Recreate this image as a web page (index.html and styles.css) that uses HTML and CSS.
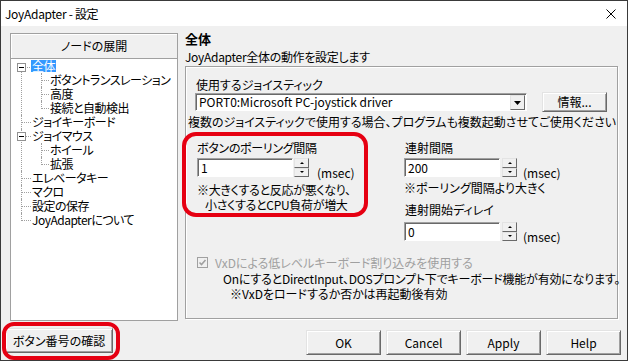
FILE: index.html
```html
<!DOCTYPE html>
<html lang="ja">
<head>
    <meta charset="UTF-8">
    <title>JoyAdapter - 設定</title>
    <link rel="stylesheet" href="styles.css">
</head>
<body>
    <div class="window">
        <div class="titlebar">
            <span class="title">JoyAdapter - 設定</span>
            <svg class="close" width="10" height="10" viewBox="0 0 10 10">
                <path d="M0.5 0.5 L9.5 9.5 M9.5 0.5 L0.5 9.5" stroke="#000" stroke-width="1" fill="none"/>
            </svg>
        </div>

        <div class="main">
            <div class="tree-panel">
                <div class="tree-head">ノードの展開</div>
                <ul class="tree">
                    <li>
                        <span class="toggle"></span><span class="node sel">全体</span>
                        <ul>
                            <li><span class="node">ボタントランスレーション</span></li>
                            <li><span class="node">高度</span></li>
                            <li><span class="node">接続と自動検出</span></li>
                        </ul>
                    </li>
                    <li><span class="node">ジョイキーボード</span></li>
                    <li>
                        <span class="toggle"></span><span class="node">ジョイマウス</span>
                        <ul>
                            <li><span class="node">ホイール</span></li>
                            <li><span class="node">拡張</span></li>
                        </ul>
                    </li>
                    <li><span class="node">エレベータキー</span></li>
                    <li><span class="node">マクロ</span></li>
                    <li><span class="node">設定の保存</span></li>
                    <li><span class="node">JoyAdapterについて</span></li>
                </ul>
            </div>

            <div class="page">
                <div class="page-title">全体</div>
                <div class="page-desc">JoyAdapter全体の動作を設定します</div>

                <div class="group">
                    <div class="label">使用するジョイスティック</div>
                    <div class="combo-row">
                        <div class="combo">
                            <span class="combo-text">PORT0:Microsoft PC-joystick driver</span>
                            <span class="combo-btn">
                                <svg width="7" height="4" viewBox="0 0 7 4"><polygon points="0,0 7,0 3.5,4" fill="#000"/></svg>
                            </span>
                        </div>
                        <button class="btn info-btn">情報...</button>
                    </div>
                    <div class="wide-note">複数のジョイスティックで使用する場合、プログラムも複数起動させてご使用ください</div>

                    <div class="cols">
                        <div class="col polling">
                            <div class="label">ボタンのポーリング間隔</div>
                            <div class="spin-row">
                                <div class="field">1</div>
                                <div class="spin"><span class="up"></span><span class="down"></span></div>
                                <span class="unit">(msec)</span>
                            </div>
                            <div class="hint first">※大きくすると反応が悪くなり、</div>
                            <div class="hint indent">小さくするとCPU負荷が増大</div>
                        </div>

                        <div class="col repeat">
                            <div class="label">連射間隔</div>
                            <div class="spin-row">
                                <div class="field">200</div>
                                <div class="spin"><span class="up"></span><span class="down"></span></div>
                                <span class="unit">(msec)</span>
                            </div>
                            <div class="repeat-note">※ポーリング間隔より大きく</div>
                            <div class="label delay-label">連射開始ディレイ</div>
                            <div class="spin-row delay-row">
                                <div class="field">0</div>
                                <div class="spin"><span class="up"></span><span class="down"></span></div>
                                <span class="unit">(msec)</span>
                            </div>
                        </div>
                    </div>

                    <div class="check-row">
                        <span class="checkbox">
                            <svg width="9" height="9" viewBox="0 0 9 9"><path d="M1.5 4.5 L3.5 6.5 L7.5 2" stroke="#a0a0a0" stroke-width="1.6" fill="none"/></svg>
                        </span>
                        <span class="check-label">VxDによる低レベルキーボード割り込みを使用する</span>
                    </div>
                    <div class="desc line1">OnにするとDirectInput、DOSプロンプト下でキーボード機能が有効になります。</div>
                    <div class="desc line2">※VxDをロードするか否かは再起動後有効</div>
                </div>
            </div>
        </div>

        <div class="footer">
            <div class="confirm-wrap">
                <button class="btn confirm-btn">ボタン番号の確認</button>
            </div>
            <div class="actions">
                <button class="btn action-btn">OK</button>
                <button class="btn action-btn">Cancel</button>
                <button class="btn action-btn">Apply</button>
                <button class="btn action-btn">Help</button>
            </div>
        </div>
    </div>
</body>
</html>
```

FILE: styles.css
```css
body {
    margin: 0;
    overflow: hidden;
    font-family: "Noto Sans CJK JP", "Noto Sans", sans-serif;
    font-size: 12px;
    font-feature-settings: "palt";
    color: #000;
    background: #f0f0f0;
}

.window {
    width: 628px;
    height: 361px;
    box-sizing: border-box;
    border: 1px solid #3a3a3a;
    background: #f0f0f0;
    display: flex;
    flex-direction: column;
}

.titlebar {
    height: 25px;
    flex-shrink: 0;
    background: #fff;
    display: flex;
    align-items: center;
    justify-content: space-between;
    padding: 0 11px 0 4px;
}

.title {
    line-height: 14px;
    letter-spacing: -0.3px;
}

.main {
    display: flex;
    align-items: flex-start;
    height: 295px;
    box-sizing: border-box;
    padding: 7px 0 0 9px;
}

/* tree */
.tree-panel {
    width: 168px;
    height: 288px;
    box-sizing: border-box;
    border: 1px solid #a0a0a0;
    background: #fff;
    flex-shrink: 0;
}

.tree-head {
    height: 24px;
    line-height: 24px;
    text-align: center;
    background: #f0f0f0;
    border-bottom: 1px solid #a0a0a0;
    box-shadow: inset 1px 1px 0 #fff;
}

.tree,
.tree ul {
    list-style: none;
    margin: 0;
    white-space: nowrap;
}

.tree {
    padding: 0 0 0 10px;
    letter-spacing: -0.5px;
}

.tree ul {
    padding: 0 0 0 9px;
}

.tree li {
    position: relative;
    padding-left: 11px;
}

.tree ul li {
    padding-left: 9px;
}

.node {
    display: block;
    height: 14px;
    line-height: 14px;
}

.tree li::before {
    content: "";
    position: absolute;
    left: 0;
    top: 0;
    width: 9px;
    height: 7px;
    border-left: 1px dotted #a0a0a0;
    border-bottom: 1px dotted #a0a0a0;
}

.tree ul li::before {
    width: 7px;
}

.tree > li:first-child::before {
    border-left: none;
    left: 1px;
    width: 8px;
}

.tree li:not(:last-child)::after {
    content: "";
    position: absolute;
    left: 0;
    top: 7px;
    bottom: 0;
    border-left: 1px dotted #a0a0a0;
}

.toggle {
    position: absolute;
    left: -4px;
    top: 3px;
    width: 9px;
    height: 9px;
    box-sizing: border-box;
    border: 1px solid #919191;
    background: #fff;
    z-index: 1;
}

.toggle::after {
    content: "";
    position: absolute;
    left: 1px;
    top: 3px;
    width: 5px;
    height: 1px;
    background: #000;
}

.node.sel {
    display: table;
    margin: 1px 0 1px -1px;
    padding: 0 1px;
    height: 12px;
    line-height: 12px;
    background: #3399ff;
    color: #fff;
}

/* right page */
.page {
    width: 433px;
    margin: -1px 0 0 7px;
}

.page-title {
    font-size: 13px;
    font-weight: bold;
    line-height: 14px;
}

.page-desc {
    margin-top: 4px;
    line-height: 13px;
    letter-spacing: -0.3px;
}

.group {
    margin-top: 3px;
    height: 253px;
    box-sizing: border-box;
    border: 1px solid #a0a0a0;
    box-shadow: inset 1px 1px 0 #fff, 1px 1px 0 #fff;
    padding: 11px 0 0 10px;
}

.label {
    line-height: 14px;
    white-space: nowrap;
}

.combo-row {
    display: flex;
    align-items: center;
    height: 20px;
}

.combo {
    width: 332px;
    height: 18px;
    margin-left: -1px;
    box-sizing: border-box;
    display: flex;
    align-items: stretch;
    background: #fff;
    border: 1px solid;
    border-color: #a0a0a0 #fff #fff #a0a0a0;
    box-shadow: inset 1px 1px 0 #696969;
}

.combo-text {
    flex: 1;
    padding: 1px 0 0 3px;
    line-height: 14px;
    white-space: nowrap;
}

.combo-btn {
    width: 15px;
    margin: 1px 1px 0 0;
    box-sizing: border-box;
    display: flex;
    align-items: center;
    justify-content: center;
    background: #f0f0f0;
    border: 1px solid;
    border-color: #e3e3e3 #696969 #696969 #e3e3e3;
}

.btn {
    font: inherit;
    color: #000;
    padding: 0;
    background: #f0f0f0;
    border: 1px solid;
    border-color: #e3e3e3 #696969 #696969 #e3e3e3;
    box-shadow: inset 1px 1px 0 #fff, inset -1px -1px 0 #a0a0a0;
    line-height: 14px;
}

.info-btn {
    width: 65px;
    height: 20px;
    margin-left: 15px;
}

.wide-note {
    margin: 3px 0 0 -8px;
    line-height: 14px;
    white-space: nowrap;
}

.cols {
    display: flex;
    margin-top: 12px;
    height: 100px;
}

.col {
    position: relative;
}

.polling {
    width: 207px;
    margin-left: 1px;
}

.polling::before {
    content: "";
    position: absolute;
    left: -15px;
    top: -9px;
    width: 186px;
    height: 85px;
    box-sizing: border-box;
    border: 4px solid #e60012;
    border-radius: 14px;
}

.polling .label,
.polling .hint {
    letter-spacing: -0.3px;
}

.repeat .label {
    padding-left: 1px;
}

.spin-row {
    display: flex;
    align-items: flex-start;
    margin-top: 3px;
    height: 19px;
}

.field {
    width: 96px;
    height: 19px;
    box-sizing: border-box;
    background: #fff;
    border: 1px solid;
    border-color: #a0a0a0 #fff #fff #a0a0a0;
    box-shadow: inset 1px 1px 0 #696969;
    padding-left: 3px;
    line-height: 17px;
}

.spin {
    width: 15px;
    height: 19px;
    margin-left: 1px;
    display: flex;
    flex-direction: column;
}

.repeat .spin {
    margin-left: 2px;
}

.spin span {
    flex: 1;
    box-sizing: border-box;
    display: flex;
    align-items: center;
    justify-content: center;
    background: #f0f0f0;
    border: 1px solid;
    border-color: #e3e3e3 #696969 #696969 #e3e3e3;
}

.spin .up::after,
.spin .down::after {
    content: "";
    width: 0;
    height: 0;
    border-left: 2px solid transparent;
    border-right: 2px solid transparent;
}

.spin .up::after {
    border-bottom: 2px solid #000;
}

.spin .down::after {
    border-top: 2px solid #000;
}

.unit {
    margin: 8px 0 0 8px;
    line-height: 14px;
}

.repeat .unit {
    margin-left: 6px;
}

.hint {
    line-height: 15px;
    white-space: nowrap;
}

.hint.first {
    margin-top: 5px;
}

.hint.indent {
    padding-left: 8px;
}

.repeat-note {
    margin-top: 4px;
    line-height: 14px;
    white-space: nowrap;
}

.delay-label {
    margin-top: 8px;
}

.delay-row {
    margin-top: 5px;
}

.check-row {
    display: flex;
    align-items: center;
    height: 14px;
    margin: 14px 0 0 1px;
}

.checkbox {
    width: 11px;
    height: 11px;
    box-sizing: border-box;
    border: 1px solid #a0a0a0;
    background: #f0f0f0;
    display: flex;
    align-items: center;
    justify-content: center;
}

.check-label {
    margin-left: 7px;
    color: #a0a0a0;
    white-space: nowrap;
}

.desc {
    line-height: 15px;
    white-space: nowrap;
}

.desc.line1 {
    margin-top: 2px;
    padding-left: 27px;
    letter-spacing: -0.2px;
}

.desc.line2 {
    padding-left: 34px;
}

/* bottom buttons */
.footer {
    display: flex;
    align-items: flex-start;
    padding: 7px 6px 0 4px;
}

.confirm-wrap {
    position: relative;
}

.confirm-wrap::before {
    content: "";
    position: absolute;
    left: -3px;
    top: -6px;
    width: 118px;
    height: 38px;
    box-sizing: border-box;
    border: 4px solid #e60012;
    border-radius: 12px;
}

.confirm-btn {
    width: 108px;
    height: 25px;
}

.actions {
    margin: 2px 0 0 auto;
    display: flex;
    gap: 5px;
}

.action-btn {
    width: 75px;
    height: 25px;
}
```
